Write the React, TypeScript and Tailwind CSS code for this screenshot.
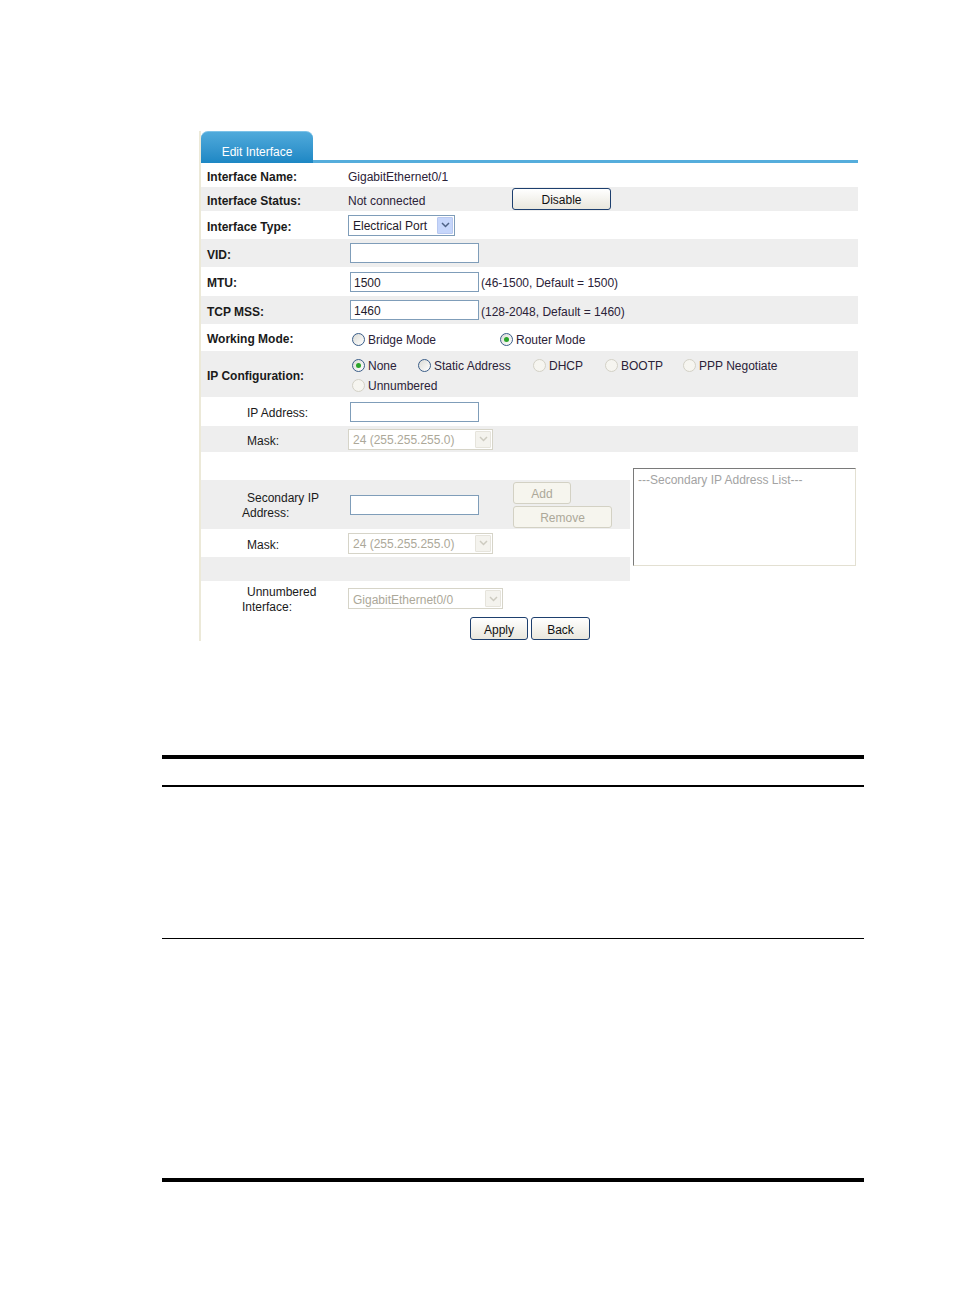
import type { ReactNode } from 'react';
import clsx from 'clsx';

function Radio({ checked = false, disabled = false }: { checked?: boolean; disabled?: boolean }) {
  return (
    <span
      className={clsx(
        'inline-flex h-[13px] w-[13px] shrink-0 items-center justify-center rounded-full border',
        disabled
          ? 'border-[#d3d1c6] bg-[#f6f5f0]'
          : 'border-[#3a5d88] bg-linear-to-br from-[#dcdcd6] to-white'
      )}
    >
      {checked && <span className="h-[5px] w-[5px] rounded-full bg-[#2aa52a]" />}
    </span>
  );
}

function Option({
  label,
  width,
  checked,
  disabled,
}: {
  label: string;
  width?: string;
  checked?: boolean;
  disabled?: boolean;
}) {
  return (
    <span className={clsx('flex items-center gap-[3px]', width)}>
      <Radio checked={checked} disabled={disabled} />
      <span className="pt-[2px] text-[#2b2238]">{label}</span>
    </span>
  );
}

function Chevron({ color }: { color: string }) {
  return (
    <svg width="9" height="6" viewBox="0 0 9 6" fill="none">
      <polyline points="1,1 4.5,4.5 8,1" stroke={color} strokeWidth="1.5" />
    </svg>
  );
}

function Select({ value, width, disabled = false }: { value: string; width: string; disabled?: boolean }) {
  return (
    <div
      className={clsx(
        'flex h-[21px] items-center justify-between border bg-white pl-[4px] pr-[1px]',
        width,
        disabled ? 'border-[#d6d4c8] text-[#aca899]' : 'border-[#7f9db9] text-[#1f1a2a]'
      )}
    >
      <span className="pt-[2px]">{value}</span>
      <span
        className={clsx(
          'flex h-[17px] w-[16px] items-center justify-center rounded-[1px] border',
          disabled ? 'border-[#e6e4dc] bg-[#f4f3ee]' : 'border-[#b8c8f0] bg-[#c6d6fb]'
        )}
      >
        <Chevron color={disabled ? '#cdcbc0' : '#4d6185'} />
      </span>
    </div>
  );
}

function TextBox({ value = '' }: { value?: string }) {
  return (
    <div className="ml-[2px] flex h-[20px] w-[129px] items-center border border-[#7f9db9] bg-white pl-[3px] pt-[2px] text-[#1f1a2a]">
      {value}
    </div>
  );
}

function Button({ label, width, disabled = false }: { label: string; width: string; disabled?: boolean }) {
  return (
    <button
      type="button"
      className={clsx(
        'flex items-center justify-center rounded-[3px] border pt-[2px]',
        width,
        disabled
          ? 'border-[#d3d1c4] bg-[#f6f5ee] text-[#aca899]'
          : 'border-[#1d3f6e] bg-linear-to-b from-white to-[#e9e7dd] text-[#111]'
      )}
    >
      {label}
    </button>
  );
}

function Row({
  label,
  gray = false,
  h,
  sub = false,
  children,
}: {
  label: ReactNode;
  gray?: boolean;
  h: string;
  sub?: boolean;
  children?: ReactNode;
}) {
  return (
    <div className={clsx('flex items-center', h, gray && 'bg-[#eeeeee]')}>
      <div
        className={clsx(
          'w-[147px] shrink-0 pt-[3px] text-[#1a1a1a]',
          sub ? 'pl-[46px]' : 'pl-[6px] font-bold'
        )}
      >
        {label}
      </div>
      <div className="flex flex-1 items-center">{children}</div>
    </div>
  );
}

function TwoLineLabel({ first, second }: { first: string; second: string }) {
  return (
    <div className="w-[147px] shrink-0 pl-[41px] pt-[3px] leading-[15px] text-[#1a1a1a]">
      <div className="indent-[5px]">{first}</div>
      <div>{second}</div>
    </div>
  );
}

export default function App() {
  return (
    <div className="min-h-[1296px] w-[954px] bg-white pt-[131px] font-['Liberation_Sans',Arial,sans-serif] text-[12px] leading-[14px]">
      <div className="ml-[199px] w-[659px] border-l-2 border-[#ece9d8]">
        {/* tab header */}
        <div className="flex h-[32px] items-end">
          <div className="h-[32px] w-[112px] shrink-0 rounded-t-[7px] border-t border-[#7cc2e8] bg-linear-to-b from-[#4faadb] to-[#1c87c4] pt-[13px] text-center text-white">
            Edit Interface
          </div>
          <div className="h-[3px] flex-1 bg-[#55addc]" />
        </div>

        <Row label="Interface Name:" h="h-[24px]">
          <span className="pt-[3px] text-[#2b2238]">GigabitEthernet0/1</span>
        </Row>
        <Row label="Interface Status:" gray h="h-[24px]">
          <span className="w-[164px] pt-[3px] text-[#2b2238]">Not connected</span>
          <Button label="Disable" width="h-[22px] w-[99px]" />
        </Row>
        <Row label="Interface Type:" h="h-[28px]">
          <Select value="Electrical Port" width="w-[107px]" />
        </Row>
        <Row label="VID:" gray h="h-[28px]">
          <TextBox />
        </Row>
        <Row label="MTU:" h="h-[29px]">
          <TextBox value="1500" />
          <span className="ml-[2px] pt-[3px] text-[#2b2238]">(46-1500, Default = 1500)</span>
        </Row>
        <Row label="TCP MSS:" gray h="h-[28px]">
          <TextBox value="1460" />
          <span className="ml-[2px] pt-[3px] text-[#2b2238]">(128-2048, Default = 1460)</span>
        </Row>
        <Row label="Working Mode:" h="h-[27px]">
          <div className="flex pl-[4px] pt-[3px]">
            <Option label="Bridge Mode" width="w-[148px]" />
            <Option label="Router Mode" checked />
          </div>
        </Row>
        <Row label="IP Configuration:" gray h="h-[46px]">
          <div className="flex flex-col pl-[4px] pt-[2px]">
            <div className="flex h-[20px] items-center">
              <Option label="None" width="w-[66px]" checked />
              <Option label="Static Address" width="w-[115px]" />
              <Option label="DHCP" width="w-[72px]" disabled />
              <Option label="BOOTP" width="w-[78px]" disabled />
              <Option label="PPP Negotiate" disabled />
            </div>
            <div className="flex h-[20px] items-center">
              <Option label="Unnumbered" disabled />
            </div>
          </div>
        </Row>
        <Row label="IP Address:" sub h="h-[29px]">
          <TextBox />
        </Row>
        <Row label="Mask:" sub gray h="h-[26px]">
          <Select value="24 (255.255.255.0)" width="w-[145px]" disabled />
        </Row>

        {/* secondary address block with list on the right */}
        <div className="flex">
          <div className="w-[429px] shrink-0">
            <div className="h-[28px]" />
            <div className="flex h-[49px] items-center bg-[#eeeeee]">
              <TwoLineLabel first="Secondary IP" second="Address:" />
              <TextBox />
              <div className="ml-[34px] flex flex-col gap-[2px] self-start pt-[2px]">
                <Button label="Add" width="h-[22px] w-[58px]" disabled />
                <Button label="Remove" width="h-[22px] w-[99px]" disabled />
              </div>
            </div>
            <Row label="Mask:" sub h="h-[28px]">
              <Select value="24 (255.255.255.0)" width="w-[145px]" disabled />
            </Row>
            <div className="h-[24px] bg-[#eeeeee]" />
          </div>
          <div className="ml-[3px] mt-[16px] h-[98px] w-[223px] border-t border-l border-r border-b border-t-[#7a7a7a] border-l-[#7a7a7a] border-r-[#e3e0d2] border-b-[#e3e0d2] bg-white pl-[4px] pt-[4px] text-[#a3a3a3]">
            ---Secondary IP Address List---
          </div>
        </div>

        <div className="flex h-[32px] items-center">
          <div className="w-[147px] shrink-0 pl-[41px] pt-[5px] leading-[15px] text-[#1a1a1a]">
            <div className="indent-[5px]">Unnumbered</div>
            <div>Interface:</div>
          </div>
          <div className="pt-[3px]">
            <Select value="GigabitEthernet0/0" width="w-[155px]" disabled />
          </div>
        </div>
        <div className="flex h-[28px] gap-[3px] pl-[269px] pt-[4px]">
          <Button label="Apply" width="h-[23px] w-[58px]" />
          <Button label="Back" width="h-[23px] w-[59px]" />
        </div>
      </div>

      {/* document table rules */}
      <div className="ml-[162px] w-[702px]">
        <div className="mt-[114px] h-[4px] bg-black" />
        <div className="mt-[26px] h-[2px] bg-black" />
        <div className="mt-[151px] h-[1px] bg-black" />
        <div className="mt-[239px] h-[4px] bg-black" />
      </div>
    </div>
  );
}
